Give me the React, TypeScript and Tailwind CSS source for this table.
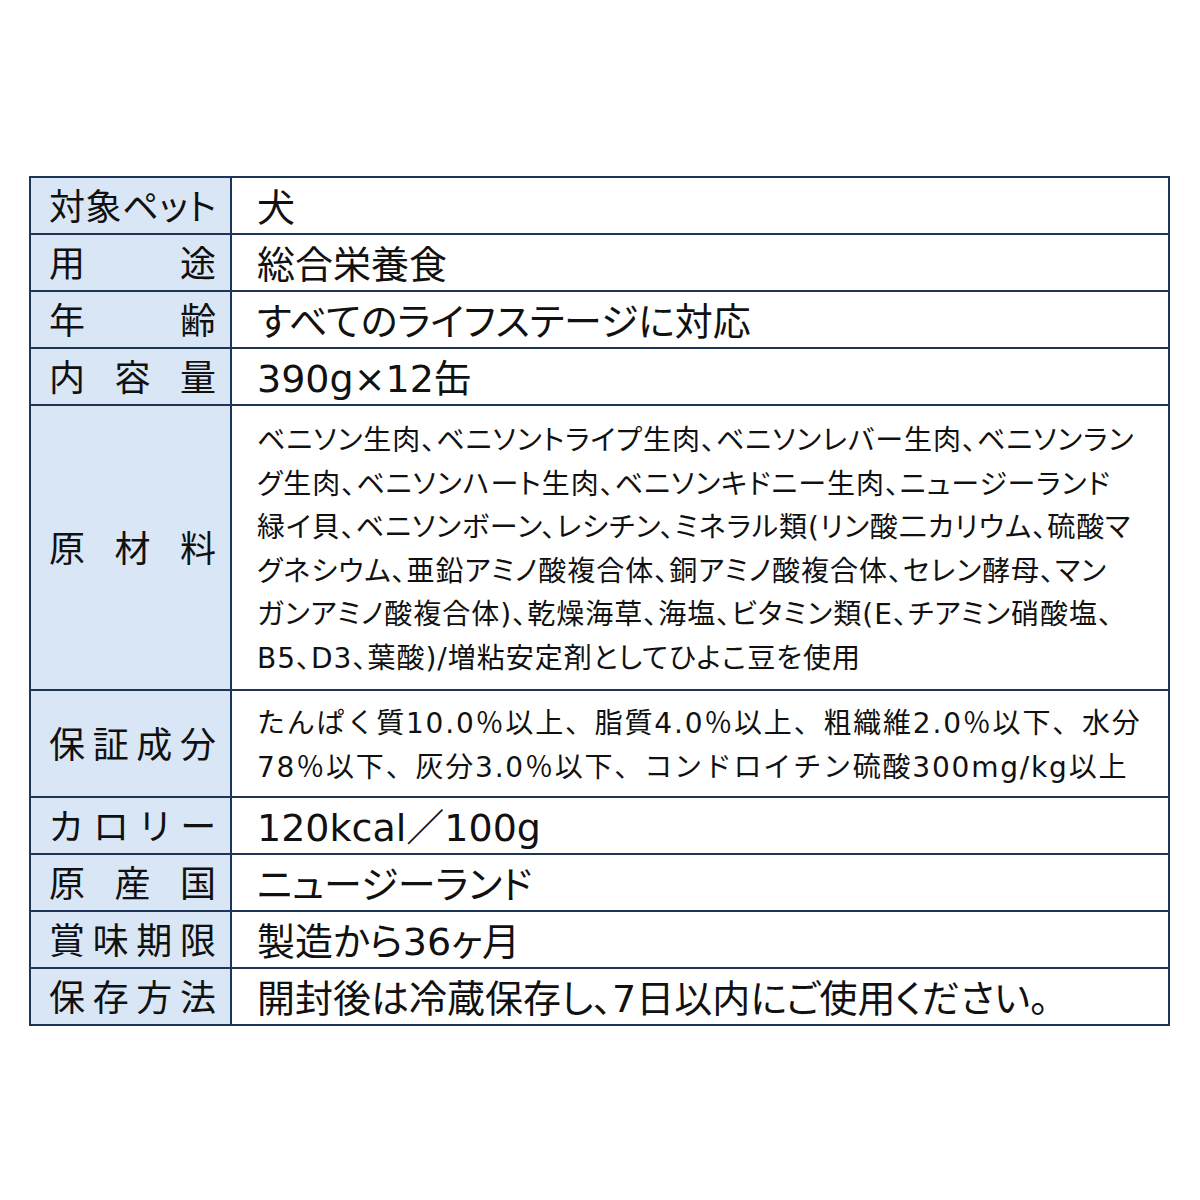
const font = "font-['DejaVu_Sans','Noto_Sans_CJK_JP',sans-serif]";

type Row = { label: string; value: string[]; kind: "lg" | "list" | "spec"; h: string };

const rows: Row[] = [
  { label: "対象ペット", value: ["犬"], kind: "lg", h: "h-[57px]" },
  { label: "用途", value: ["総合栄養食"], kind: "lg", h: "h-[57px]" },
  { label: "年齢", value: ["すべてのライフステージに対応"], kind: "lg", h: "h-[57px]" },
  { label: "内容量", value: ["390g×12缶"], kind: "lg", h: "h-[57px]" },
  {
    label: "原材料",
    value: [
      "ベニソン生肉、ベニソントライプ生肉、ベニソンレバー生肉、ベニソンラン",
      "グ生肉、ベニソンハート生肉、ベニソンキドニー生肉、ニュージーランド",
      "緑イ貝、ベニソンボーン、レシチン、ミネラル類(リン酸二カリウム、硫酸マ",
      "グネシウム、亜鉛アミノ酸複合体、銅アミノ酸複合体、セレン酵母、マン",
      "ガンアミノ酸複合体)、乾燥海草、海塩、ビタミン類(E、チアミン硝酸塩、",
      "B5、D3、葉酸)/増粘安定剤としてひよこ豆を使用",
    ],
    kind: "list",
    h: "h-[285px]",
  },
  {
    label: "保証成分",
    value: [
      "たんぱく質10.0％以上、脂質4.0％以上、粗織維2.0％以下、水分",
      "78％以下、灰分3.0％以下、コンドロイチン硫酸300mg/kg以上",
    ],
    kind: "spec",
    h: "h-[107px]",
  },
  { label: "カロリー", value: ["120kcal／100g"], kind: "lg", h: "h-[57px]" },
  { label: "原産国", value: ["ニュージーランド"], kind: "lg", h: "h-[57px]" },
  { label: "賞味期限", value: ["製造から36ヶ月"], kind: "lg", h: "h-[57px]" },
  { label: "保存方法", value: ["開封後は冷蔵保存し、7日以内にご使用ください。"], kind: "lg", h: "h-[57px]" },
];

const lineClass = {
  lg: "text-[38px] leading-[42px] whitespace-nowrap [font-feature-settings:'palt']",
  list: "text-[28px] leading-[43.5px] tracking-[1px] whitespace-nowrap [font-feature-settings:'palt']",
  spec: "text-[28px] leading-[44px] tracking-[1.8px] whitespace-nowrap",
};

export default function App() {
  return (
    <div className={`w-[1200px] h-[1200px] bg-white pt-[176px] pl-[29px] text-[#111] ${font}`}>
      <table className="w-[1141px] table-fixed border-collapse">
        <colgroup>
          <col className="w-[201px]" />
          <col />
        </colgroup>
        <tbody>
          {rows.map((r) => (
            <tr key={r.label} className={r.h}>
              <td className="border-2 border-[#1d3557] bg-[#d9e6f5] pl-[18px] pr-[14px] pt-1 align-middle">
                <div className="whitespace-nowrap text-[36px] leading-[42px] text-justify [text-align-last:justify] [font-feature-settings:'palt']">
                  {r.label}
                </div>
              </td>
              <td className="border-2 border-[#1d3557] pl-[25px] pt-1 align-middle">
                {r.value.map((line) => (
                  <div key={line} className={lineClass[r.kind]}>
                    {line}
                  </div>
                ))}
              </td>
            </tr>
          ))}
        </tbody>
      </table>
    </div>
  );
}
